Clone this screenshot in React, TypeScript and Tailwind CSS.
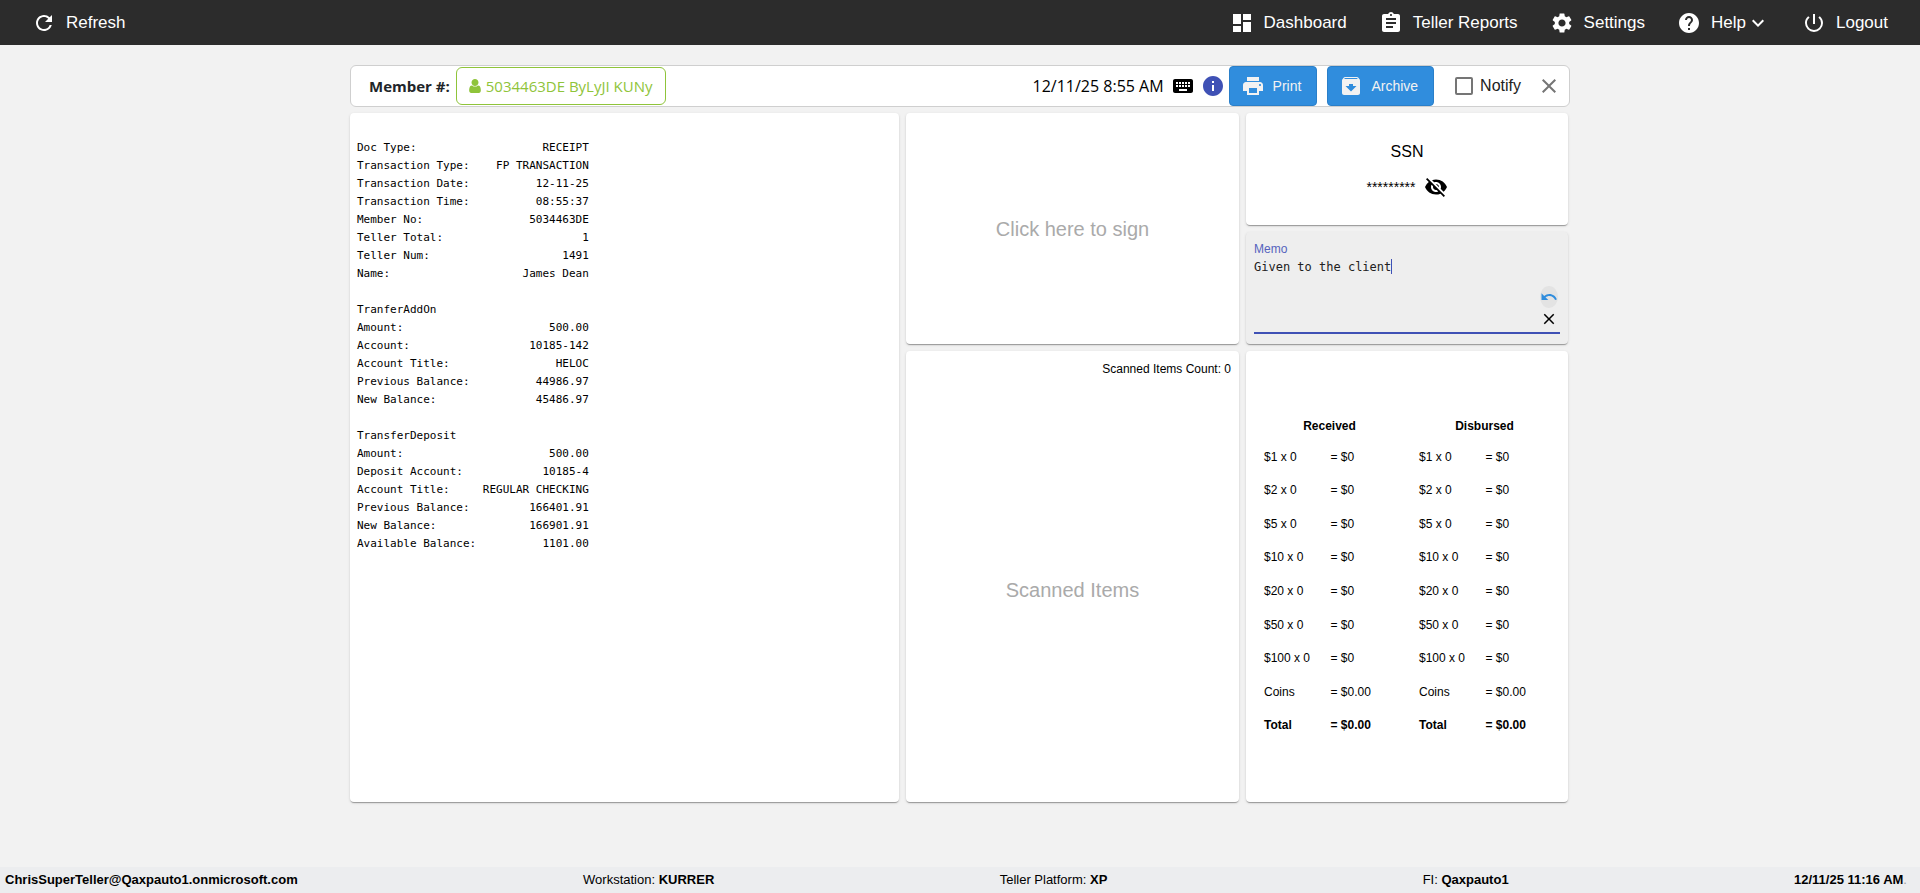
import { useState } from 'react'
import type { ReactNode } from 'react'
import {
  MdArchive,
  MdAssignment,
  MdClose,
  MdDashboard,
  MdExpandMore,
  MdHelp,
  MdInfo,
  MdKeyboard,
  MdPowerSettingsNew,
  MdPrint,
  MdRefresh,
  MdSettings,
  MdUndo,
  MdVisibilityOff,
} from 'react-icons/md'

const RECEIPT_WIDTH = 35

const RECEIPT_ROWS: readonly (readonly [string, string])[] = [
  ['', ''],
  ['Doc Type:', 'RECEIPT'],
  ['Transaction Type:', 'FP TRANSACTION'],
  ['Transaction Date:', '12-11-25'],
  ['Transaction Time:', '08:55:37'],
  ['Member No:', '5034463DE'],
  ['Teller Total:', '1'],
  ['Teller Num:', '1491'],
  ['Name:', 'James Dean'],
  ['', ''],
  ['TranferAddOn', ''],
  ['Amount:', '500.00'],
  ['Account:', '10185-142'],
  ['Account Title:', 'HELOC'],
  ['Previous Balance:', '44986.97'],
  ['New Balance:', '45486.97'],
  ['', ''],
  ['TransferDeposit', ''],
  ['Amount:', '500.00'],
  ['Deposit Account:', '10185-4'],
  ['Account Title:', 'REGULAR CHECKING'],
  ['Previous Balance:', '166401.91'],
  ['New Balance:', '166901.91'],
  ['Available Balance:', '1101.00'],
]

const DENOMINATIONS = [1, 2, 5, 10, 20, 50, 100]

function formatReceipt(): string {
  return RECEIPT_ROWS.map(([label, value]) => label + value.padStart(RECEIPT_WIDTH - label.length)).join('\n')
}

function UserIcon() {
  return (
    <svg viewBox="256 128 1280 1536" width="12" height="14" fill="currentColor" aria-hidden="true">
      <path d="M1536 1399q0 109-62.5 187t-150.5 78h-854q-88 0-150.5-78t-62.5-187q0-85 8.5-160.5t31.5-152 58.5-131 94-89 134.5-34.5q131 128 313 128t313-128q76 0 134.5 34.5t94 89 58.5 131 31.5 152 8.5 160.5zM1280 512q0 159-112.5 271.5t-271.5 112.5-271.5-112.5-112.5-271.5 112.5-271.5 271.5-112.5 271.5 112.5 112.5 271.5z" />
    </svg>
  )
}

interface NavItemProps {
  readonly icon: ReactNode
  readonly label: string
  readonly trailing?: ReactNode
}

function NavItem({ icon, label, trailing }: NavItemProps) {
  return (
    <button type="button" className="flex items-center text-[17px] leading-6 text-white">
      {icon}
      <span className="ml-[10px]">{label}</span>
      {trailing}
    </button>
  )
}

function TopNav() {
  return (
    <header className="flex h-[45px] shrink-0 items-center justify-between bg-[#2c2c2c] px-8">
      <NavItem icon={<MdRefresh size={24} />} label="Refresh" />
      <nav className="flex items-center gap-8">
        <NavItem icon={<MdDashboard size={24} />} label="Dashboard" />
        <NavItem icon={<MdAssignment size={24} />} label="Teller Reports" />
        <NavItem icon={<MdSettings size={24} />} label="Settings" />
        <NavItem icon={<MdHelp size={24} />} label="Help" trailing={<MdExpandMore size={24} />} />
        <NavItem icon={<MdPowerSettingsNew size={24} />} label="Logout" />
      </nav>
    </header>
  )
}

interface ActionButtonProps {
  readonly icon: ReactNode
  readonly label: string
}

function ActionButton({ icon, label }: ActionButtonProps) {
  return (
    <button
      type="button"
      className="flex h-10 items-center gap-2 rounded border border-[#2a7fc9] bg-[#308ddd] pr-[15px] pl-[11px] text-sm text-[#f2f2f2]"
    >
      {icon}
      {label}
    </button>
  )
}

function MemberBar() {
  const [notify, setNotify] = useState(false)

  return (
    <div className="flex items-center rounded-md border border-[#cfcfcf] bg-white pr-2 pl-[18px]">
      <span className="font-['Open_Sans','Noto_Sans',sans-serif] text-[15px] leading-6 font-bold text-[#212529]">
        Member #:
      </span>
      <button
        type="button"
        className="ml-[6px] flex h-[38px] items-center gap-[5px] rounded-md border border-[#8fc43a] px-3 font-['Open_Sans','Noto_Sans',sans-serif] text-[15px] text-[#8fc43a]"
      >
        <UserIcon />
        5034463DE ByLyJI KUNy
      </button>
      <div className="ml-auto flex items-center">
        <span className="font-['Open_Sans','Noto_Sans',sans-serif] text-base text-black">12/11/25 8:55 AM</span>
        <button type="button" aria-label="Keyboard" className="ml-[7px] text-black">
          <MdKeyboard size={24} />
        </button>
        <button type="button" aria-label="Information" className="mr-1 ml-[6px] text-[#3f51b5]">
          <MdInfo size={24} />
        </button>
        <div className="flex items-center gap-[10px]">
          <ActionButton icon={<MdPrint size={24} />} label="Print" />
          <ActionButton icon={<MdArchive size={24} />} label="Archive" />
        </div>
        <label className="ml-[21px] flex items-center gap-[7px] text-base text-[#212121]">
          <input
            type="checkbox"
            checked={notify}
            onChange={(event) => setNotify(event.target.checked)}
            className="size-[18px] appearance-none rounded-xs border-2 border-[#757575] checked:bg-[#308ddd]"
          />
          Notify
        </label>
        <button type="button" aria-label="Close" className="ml-4 text-[#757575]">
          <MdClose size={24} />
        </button>
      </div>
    </div>
  )
}

interface CardProps {
  readonly className?: string
  readonly children: ReactNode
}

function Card({ className = 'bg-white', children }: CardProps) {
  return (
    <section
      className={`rounded shadow-[0_2px_1px_-1px_rgba(0,0,0,0.2),0_1px_1px_0_rgba(0,0,0,0.14),0_1px_3px_0_rgba(0,0,0,0.12)] ${className}`}
    >
      {children}
    </section>
  )
}

function MemoCard() {
  const [memo, setMemo] = useState('Given to the client')

  return (
    <Card className="flex flex-col bg-[#eeeeee] px-2 pt-2 pb-[10px]">
      <div className="flex min-h-0 flex-1 flex-col border-b-2 border-[#3f51b5]">
        <label htmlFor="memo" className="text-xs leading-[18px] text-[#5563bd]">
          Memo
        </label>
        <div className="relative flex min-h-0 flex-1">
          <textarea
            id="memo"
            rows={3}
            value={memo}
            onChange={(event) => setMemo(event.target.value)}
            className="w-full resize-none bg-transparent font-['DejaVu_Sans_Mono',monospace] text-xs leading-[18px] text-[#212121] caret-[#3f51b5] outline-none"
          />
          <span className="absolute top-[1px] left-[137px] h-[15px] w-px bg-[#3f51b5]" />
          <div className="absolute right-[2px] bottom-1 flex flex-col items-center gap-[2px]">
            <button
              type="button"
              aria-label="Undo"
              className="flex h-[22px] w-[18px] items-center justify-center rounded-[50%] bg-[#e3e3e3] text-[#308ddd]"
            >
              <MdUndo size={18} />
            </button>
            <button type="button" aria-label="Clear" onClick={() => setMemo('')} className="text-black">
              <MdClose size={18} />
            </button>
          </div>
        </div>
      </div>
    </Card>
  )
}

function CashCard() {
  return (
    <Card className="flex items-center bg-white px-[6px]">
      <table className="h-[331px] w-full table-fixed text-left text-xs leading-4 text-black">
        <colgroup>
          <col className="w-[25%]" />
          <col className="w-[25%]" />
          <col className="w-[25%]" />
          <col className="w-[25%]" />
        </colgroup>
        <thead>
          <tr className="h-[29px]">
            <th colSpan={2} className="text-center">
              Received
            </th>
            <th colSpan={2} className="text-center">
              Disbursed
            </th>
          </tr>
        </thead>
        <tbody>
          {DENOMINATIONS.map((value) => (
            <tr key={value}>
              <td className="pl-3">{`$${value} x 0`}</td>
              <td className="pl-px">= $0</td>
              <td className="pl-3">{`$${value} x 0`}</td>
              <td className="pl-px">= $0</td>
            </tr>
          ))}
          <tr>
            <td className="pl-3">Coins</td>
            <td className="pl-px">= $0.00</td>
            <td className="pl-3">Coins</td>
            <td className="pl-px">= $0.00</td>
          </tr>
          <tr className="font-bold">
            <td className="pl-3">Total</td>
            <td className="pl-px">= $0.00</td>
            <td className="pl-3">Total</td>
            <td className="pl-px">= $0.00</td>
          </tr>
        </tbody>
      </table>
    </Card>
  )
}

function StatusBar() {
  return (
    <footer className="flex h-[26px] shrink-0 items-center justify-between bg-[#ecedef] px-[5px] text-[13px] text-black">
      <b>ChrisSuperTeller@Qaxpauto1.onmicrosoft.com</b>
      <span>
        Workstation: <b>KURRER</b>
      </span>
      <span className="pr-[30px]">
        Teller Platform: <b>XP</b>
      </span>
      <span>
        FI: <b>Qaxpauto1</b>
      </span>
      <span className="pr-2">
        <b>12/11/25 11:16 AM</b>
        <span className="text-[#a0a0a0]">.</span>
      </span>
    </footer>
  )
}

export default function App() {
  return (
    <div className="flex min-h-screen flex-col bg-[#f2f2f2] font-['Liberation_Sans',Arial,sans-serif]">
      <TopNav />
      <main className="mx-auto flex w-full max-w-[1220px] flex-1 flex-col gap-[6px] pt-5 pb-[65px]">
        <MemberBar />
        <div className="grid flex-1 grid-cols-[549fr_333fr_322fr] grid-rows-[231fr_451fr] gap-[7px] pr-[2px]">
          <Card className="row-span-2 bg-white px-[7px] py-2">
            <pre className="font-['DejaVu_Sans_Mono',monospace] text-[11px] leading-[18px] text-black">
              {formatReceipt()}
            </pre>
          </Card>
          <Card className="flex bg-white">
            <button type="button" className="flex-1 text-xl text-[#aaaaaa]">
              Click here to sign
            </button>
          </Card>
          <div className="grid grid-rows-2 gap-[7px]">
            <Card className="flex flex-col items-center justify-center gap-[11px] bg-white text-black">
              <h2 className="text-base leading-6">SSN</h2>
              <div className="flex items-center gap-2 text-sm">
                <span>*********</span>
                <button type="button" aria-label="Show SSN">
                  <MdVisibilityOff size={24} />
                </button>
              </div>
            </Card>
            <MemoCard />
          </div>
          <Card className="flex flex-col bg-white">
            <p className="pt-[9px] pr-2 text-right text-xs leading-[18px] text-black">Scanned Items Count: 0</p>
            <div className="flex flex-1 items-center justify-center text-xl text-[#aaaaaa]">Scanned Items</div>
          </Card>
          <CashCard />
        </div>
      </main>
      <StatusBar />
    </div>
  )
}
